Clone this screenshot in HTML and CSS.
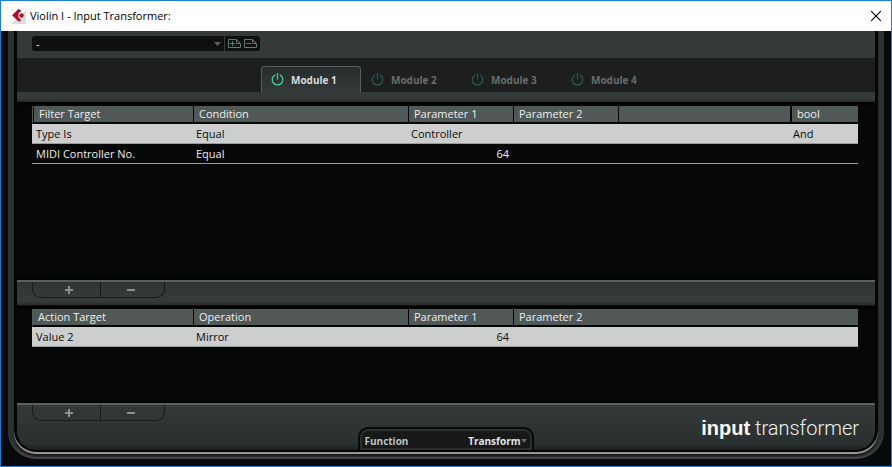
FILE: index.html
```html
<!DOCTYPE html>
<html lang="en">
<head>
<meta charset="utf-8">
<title>Violin I - Input Transformer:</title>
<meta name="viewport" content="width=device-width, initial-scale=1">
<link rel="stylesheet" href="styles.css">
</head>
<body>
<svg class="defs" aria-hidden="true">
  <symbol id="power" viewBox="0 0 13 13"><path d="M4.2 1.900a5.300 5.300 0 1 0 4.600 0M6.500 0v6.500" fill="none" stroke="currentColor" stroke-width="1.3"/></symbol>
</svg>
<div class="window">
  <header class="titlebar">
    <svg class="app-icon" viewBox="0 0 16 16" aria-hidden="true">
      <path d="M16 2v14H1z" fill="#dcdcdc"/>
      <path d="M8.500 1 2 7.200 8.500 13.500 11.500 12.500 8.500 9.500V5.500L11.500 2.500z" fill="#a5122c"/>
      <circle cx="11.500" cy="7.500" r="2.200" fill="#a5122c"/>
    </svg>
    <h1 class="title">Violin I - Input Transformer:</h1>
    <button class="close" type="button" aria-label="Close">
      <svg viewBox="0 0 10 10" aria-hidden="true"><path d="M0 0 10 10M10 0 0 10" stroke="#000" stroke-width="1.1"/></svg>
    </button>
  </header>
  <main class="body">
    <div class="frame"><div class="bezel"><div class="panel">
      <div class="toolbar">
        <div class="preset">
          <select aria-label="Preset"><option>-</option></select>
          <svg class="arrow" viewBox="0 0 7 4" aria-hidden="true"><path d="M0 0h7L3.5 4z" fill="#596462"/></svg>
        </div>
        <div class="preset-actions">
          <button type="button" aria-label="Store preset"><svg viewBox="0 0 13 9" aria-hidden="true"><path d="M.5.5h8l4 4v4H.5zM8.500.500v4h4M2 4.500h5M4.500 2v5" fill="none" stroke="#5a7a73"/></svg></button>
          <button type="button" aria-label="Remove preset"><svg viewBox="0 0 13 9" aria-hidden="true"><path d="M.5.5h8l4 4v4H.5zM8.500.500v4h4M2 4.500h5" fill="none" stroke="#5a7a73"/></svg></button>
        </div>
      </div>
      <nav class="tabs">
        <button class="tab active" type="button"><svg><use href="#power"/></svg>Module 1</button>
        <button class="tab" type="button"><svg><use href="#power"/></svg>Module 2</button>
        <button class="tab" type="button"><svg><use href="#power"/></svg>Module 3</button>
        <button class="tab" type="button"><svg><use href="#power"/></svg>Module 4</button>
      </nav>
      <div class="rail"></div>
      <section class="list filters">
        <table>
          <colgroup><col class="c-target"><col class="c-cond"><col class="c-par"><col class="c-par"><col><col class="c-bool"></colgroup>
          <thead><tr><th class="first">Filter Target</th><th>Condition</th><th>Parameter 1</th><th>Parameter 2</th><th></th><th class="last">bool</th></tr></thead>
          <tbody>
            <tr class="selected"><td>Type Is</td><td>Equal</td><td>Controller</td><td></td><td></td><td>And</td></tr>
            <tr><td>MIDI Controller No.</td><td>Equal</td><td class="num">64</td><td></td><td></td><td></td></tr>
          </tbody>
        </table>
      </section>
      <div class="bar">
        <div class="edit">
          <button type="button" aria-label="Add filter"><svg viewBox="0 0 8 8"><path d="M0 4h8M4 0v8" stroke="#8b9190" stroke-width="2"/></svg></button>
          <button type="button" aria-label="Remove filter"><svg viewBox="0 0 8 8"><path d="M0 4h8" stroke="#8b9190" stroke-width="2"/></svg></button>
        </div>
      </div>
      <section class="list actions">
        <table>
          <colgroup><col class="c-target"><col class="c-cond"><col class="c-par"><col></colgroup>
          <thead><tr><th>Action Target</th><th>Operation</th><th>Parameter 1</th><th>Parameter 2</th></tr></thead>
          <tbody><tr class="selected"><td>Value 2</td><td>Mirror</td><td class="num">64</td><td></td></tr></tbody>
        </table>
      </section>
      <footer class="footer">
        <div class="edit">
          <button type="button" aria-label="Add action"><svg viewBox="0 0 8 8"><path d="M0 4h8M4 0v8" stroke="#8b9190" stroke-width="2"/></svg></button>
          <button type="button" aria-label="Remove action"><svg viewBox="0 0 8 8"><path d="M0 4h8" stroke="#8b9190" stroke-width="2"/></svg></button>
        </div>
        <div class="function">
          <label for="fn">Function</label>
          <select id="fn"><option>Transform</option></select>
          <svg viewBox="0 0 6 4" aria-hidden="true"><path d="M0 0h6L3 4z" fill="#626867"/></svg>
        </div>
        <div class="brand"><b>input</b> transformer</div>
      </footer>
    </div></div></div>
  </main>
</div>
</body>
</html>
```
FILE: styles.css
```css
* { box-sizing: border-box; }
body { margin: 0; font: 11px/16px "Open Sans", "Noto Sans", sans-serif; color: #eceeee; }
button, select { font: inherit; color: inherit; background: none; border: 0; padding: 0; margin: 0; border-radius: 0; }
select { appearance: none; }
svg { display: block; }
.defs { position: absolute; width: 0; height: 0; }

.window { display: flex; flex-direction: column; min-height: 100vh; border: 1px solid #187fd7; background: #060a0c; }
.titlebar { display: flex; align-items: center; height: 30px; padding: 0 10px 0 9px; background: #fff; color: #000; }
.app-icon { width: 16px; height: 16px; margin-right: 4px; }
.title { flex: 1; margin: 0; font-size: 11px; font-weight: 400; line-height: 16px; }
.close svg { width: 10px; height: 10px; }

.body { flex: 1; display: flex; padding: 0 7px 7px; }
.frame { flex: 1; display: flex; padding: 0 6px 7px; border-radius: 0 0 28px 28px; background: #2c302f; box-shadow: inset 0 -2px 1px #414645; }
.bezel { flex: 1; display: flex; padding: 0 3px 2px; border-radius: 0 0 22px 22px; background: #030505; box-shadow: 0 2px 0 #939494, 0 4px 1px #191b1c; }
.panel { flex: 1; display: flex; flex-direction: column; min-width: 0; border-radius: 0 0 20px 20px; background: #343a39; }

.toolbar { display: flex; height: 27px; padding: 5px 15px 7px; }
.preset, .preset-actions { display: flex; align-items: center; background: #0f1111; }
.preset { width: 192px; border-radius: 3px 0 0 3px; padding-right: 3px; margin-right: 1px; }
.preset select { flex: 1; padding-left: 4px; line-height: 15px; }
.arrow { width: 7px; height: 4px; }
.preset-actions { gap: 3px; padding: 0 3px; border-radius: 0 3px 3px 0; }
.preset-actions svg { width: 13px; height: 9px; }

.tabs { display: flex; justify-content: center; align-items: flex-end; height: 34px; padding-left: 30px; background: #1d1f1e; }
.tab { display: flex; align-items: center; gap: 7px; width: 100px; height: 26px; padding: 0 9px; border: 1px solid transparent; border-bottom: 0; color: #696d6c; font-size: 10px; font-weight: 700; }
.tab svg { width: 13px; height: 13px; color: #2c5350; }
.tab.active { color: #d9dcdb; border-color: #58605f; border-radius: 4px 4px 0 0; background: linear-gradient(#272c2b, #343a39); }
.tab.active svg { color: #46cfa5; }
.rail { height: 11px; background: linear-gradient(#343a39 70%, #242928); border-bottom: 1px solid #000; }

.list { padding: 3px 17px 0 15px; background: linear-gradient(#000, #060808 4px, #060808 calc(100% - 4px), #020303); }
.filters { flex: 1; }
.actions { min-height: 97px; }
table { width: 100%; table-layout: fixed; border-collapse: separate; border-spacing: 0; }
.c-target { width: 161px; }
.c-cond { width: 215px; }
.c-par { width: 105px; }
.c-bool { width: 68px; }
th, td { padding: 0 4px 0 3px; text-align: left; font-weight: 400; white-space: nowrap; }
th { height: 18px; padding-left: 5px; border-left: 1px solid #050707; border-bottom: 2px solid #050707; background: #505958; line-height: 16px; }
th:first-child { border-left-color: #505958; }
th.first { box-shadow: inset 1px 0 #050707; padding-left: 6px; }
th.last { border-left-width: 2px; }
td { height: 20px; padding-left: 3px; border-bottom: 1px solid #979b9a; line-height: 19px; }
td:first-child { padding-left: 4px; }
.selected td { background: #cdcfce; color: #0c0c0c; }
.num { text-align: right; }

.bar { height: 26px; padding-left: 15px; border-top: 2px solid #596060; border-bottom: 1px solid #101312; background: linear-gradient(#303534, #363c3b 80%, #292e2d); }
.edit { display: flex; width: 133px; height: 16px; border: 1px solid #171a19; border-top: 0; border-radius: 0 0 9px 9px; }
.edit button { flex: 1; display: flex; align-items: center; justify-content: center; }
.edit button:first-child { flex: 0 0 68px; padding-left: 4px; border-right: 1px solid #171a19; }
.edit svg { width: 8px; height: 8px; }
.edit button + button { padding-right: 4px; }

.footer { display: grid; grid-template-columns: 1fr 176px 1fr; height: 47px; padding: 0 16px 0 15px; border-top: 2px solid #596060; border-radius: 0 0 20px 20px; background: linear-gradient(#343a39, #2a302f 85%, #1c2120); }
.function { align-self: end; display: flex; align-items: center; height: 23px; padding: 2px 5px 0; border: 2px solid #080a0a; border-bottom: 0; border-radius: 10px 10px 0 0; background: #161918; box-shadow: inset 0 0 0 2px #29302e; font-size: 10px; font-weight: 700; color: #bfc2c1; }
.function select { flex: 1; text-align: right; text-align-last: right; color: #e2e4e4; }
.function svg { width: 6px; height: 4px; }
.brand { justify-self: end; padding-top: 10px; font: 300 20px/26px Roboto, sans-serif; color: #eef0f0; white-space: nowrap; }
.brand b { font-family: "Liberation Sans", Arial, sans-serif; font-weight: 700; color: #fff; }
```
